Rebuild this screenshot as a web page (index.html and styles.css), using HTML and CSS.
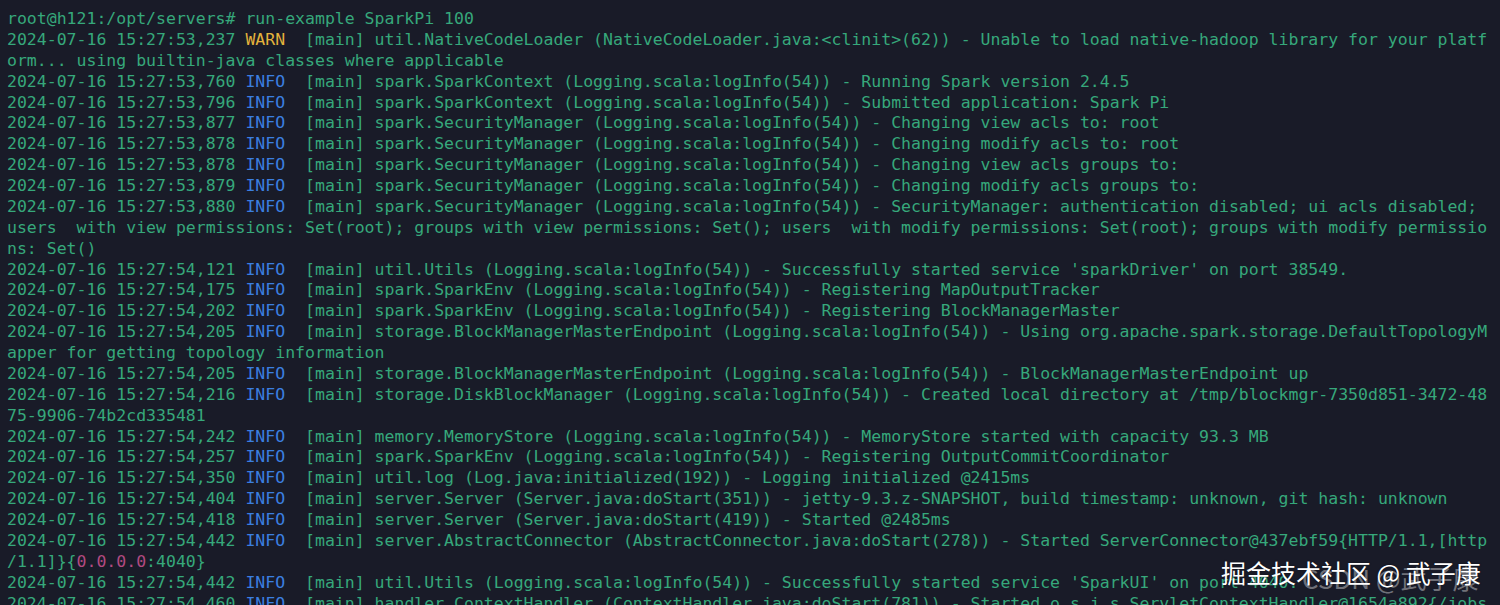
FILE: index.html
```html
<!DOCTYPE html>
<html>
<head>
<meta charset="utf-8">
<link rel="stylesheet" href="styles.css">
</head>
<body>
<div class="term">
<div class="ln">root@h121:/opt/servers# run-example SparkPi 100</div>
<div class="ln">2024-07-16 15:27:53,237 <span class="w">WARN</span>  [main] util.NativeCodeLoader (NativeCodeLoader.java:&lt;clinit&gt;(62)) - Unable to load native-hadoop library for your platf</div>
<div class="ln">orm... using builtin-java classes where applicable</div>
<div class="ln">2024-07-16 15:27:53,760 <span class="i">INFO</span>  [main] spark.SparkContext (Logging.scala:logInfo(54)) - Running Spark version 2.4.5</div>
<div class="ln">2024-07-16 15:27:53,796 <span class="i">INFO</span>  [main] spark.SparkContext (Logging.scala:logInfo(54)) - Submitted application: Spark Pi</div>
<div class="ln">2024-07-16 15:27:53,877 <span class="i">INFO</span>  [main] spark.SecurityManager (Logging.scala:logInfo(54)) - Changing view acls to: root</div>
<div class="ln">2024-07-16 15:27:53,878 <span class="i">INFO</span>  [main] spark.SecurityManager (Logging.scala:logInfo(54)) - Changing modify acls to: root</div>
<div class="ln">2024-07-16 15:27:53,878 <span class="i">INFO</span>  [main] spark.SecurityManager (Logging.scala:logInfo(54)) - Changing view acls groups to:</div>
<div class="ln">2024-07-16 15:27:53,879 <span class="i">INFO</span>  [main] spark.SecurityManager (Logging.scala:logInfo(54)) - Changing modify acls groups to:</div>
<div class="ln">2024-07-16 15:27:53,880 <span class="i">INFO</span>  [main] spark.SecurityManager (Logging.scala:logInfo(54)) - SecurityManager: authentication disabled; ui acls disabled;</div>
<div class="ln">users  with view permissions: Set(root); groups with view permissions: Set(); users  with modify permissions: Set(root); groups with modify permissio</div>
<div class="ln">ns: Set()</div>
<div class="ln">2024-07-16 15:27:54,121 <span class="i">INFO</span>  [main] util.Utils (Logging.scala:logInfo(54)) - Successfully started service 'sparkDriver' on port 38549.</div>
<div class="ln">2024-07-16 15:27:54,175 <span class="i">INFO</span>  [main] spark.SparkEnv (Logging.scala:logInfo(54)) - Registering MapOutputTracker</div>
<div class="ln">2024-07-16 15:27:54,202 <span class="i">INFO</span>  [main] spark.SparkEnv (Logging.scala:logInfo(54)) - Registering BlockManagerMaster</div>
<div class="ln">2024-07-16 15:27:54,205 <span class="i">INFO</span>  [main] storage.BlockManagerMasterEndpoint (Logging.scala:logInfo(54)) - Using org.apache.spark.storage.DefaultTopologyM</div>
<div class="ln">apper for getting topology information</div>
<div class="ln">2024-07-16 15:27:54,205 <span class="i">INFO</span>  [main] storage.BlockManagerMasterEndpoint (Logging.scala:logInfo(54)) - BlockManagerMasterEndpoint up</div>
<div class="ln">2024-07-16 15:27:54,216 <span class="i">INFO</span>  [main] storage.DiskBlockManager (Logging.scala:logInfo(54)) - Created local directory at /tmp/blockmgr-7350d851-3472-48</div>
<div class="ln">75-9906-74b2cd335481</div>
<div class="ln">2024-07-16 15:27:54,242 <span class="i">INFO</span>  [main] memory.MemoryStore (Logging.scala:logInfo(54)) - MemoryStore started with capacity 93.3 MB</div>
<div class="ln">2024-07-16 15:27:54,257 <span class="i">INFO</span>  [main] spark.SparkEnv (Logging.scala:logInfo(54)) - Registering OutputCommitCoordinator</div>
<div class="ln">2024-07-16 15:27:54,350 <span class="i">INFO</span>  [main] util.log (Log.java:initialized(192)) - Logging initialized @2415ms</div>
<div class="ln">2024-07-16 15:27:54,404 <span class="i">INFO</span>  [main] server.Server (Server.java:doStart(351)) - jetty-9.3.z-SNAPSHOT, build timestamp: unknown, git hash: unknown</div>
<div class="ln">2024-07-16 15:27:54,418 <span class="i">INFO</span>  [main] server.Server (Server.java:doStart(419)) - Started @2485ms</div>
<div class="ln">2024-07-16 15:27:54,442 <span class="i">INFO</span>  [main] server.AbstractConnector (AbstractConnector.java:doStart(278)) - Started ServerConnector@437ebf59{HTTP/1.1,[http</div>
<div class="ln">/1.1]}{<span class="m">0.0.0.0</span>:4040}</div>
<div class="ln">2024-07-16 15:27:54,442 <span class="i">INFO</span>  [main] util.Utils (Logging.scala:logInfo(54)) - Successfully started service 'SparkUI' on port 4040.</div>
<div class="ln">2024-07-16 15:27:54,460 <span class="i">INFO</span>  [main] handler.ContextHandler (ContextHandler.java:doStart(781)) - Started o.s.j.s.ServletContextHandler@1654a892{/jobs</div>
</div>
<div class="mark-faded">CSDN @武子康</div>
<div class="mark">掘金技术社区 @ 武子康</div>
</body>
</html>
```
FILE: styles.css
```css
html, body {
  margin: 0;
  padding: 0;
  background: #191b28;
  height: 605px;
  overflow: hidden;
}
.term {
  padding: 9px 0 0 7px;
  font-family: "DejaVu Sans Mono", "Liberation Mono", monospace;
  font-size: 16.5px;
  line-height: 20.88px;
  color: #36a87b;
}
.ln {
  white-space: pre;
  height: 20.88px;
}
.w { color: #e3b33c; }
.i { color: #3b7fe0; }
.m { color: #b24a80; }
.mark, .mark-faded {
  position: absolute;
  font-family: "Noto Sans CJK SC", "Noto Sans", sans-serif;
  white-space: nowrap;
}
.mark {
  left: 1221px;
  top: 555px;
  font-size: 25px;
  line-height: 34px;
  color: #ffffff;
  text-shadow: 0 0 2px rgba(0,0,0,0.4);
}
.mark-faded {
  left: 1302px;
  top: 561px;
  font-size: 26px;
  line-height: 34px;
  color: rgba(255,255,255,0.4);
}
```
